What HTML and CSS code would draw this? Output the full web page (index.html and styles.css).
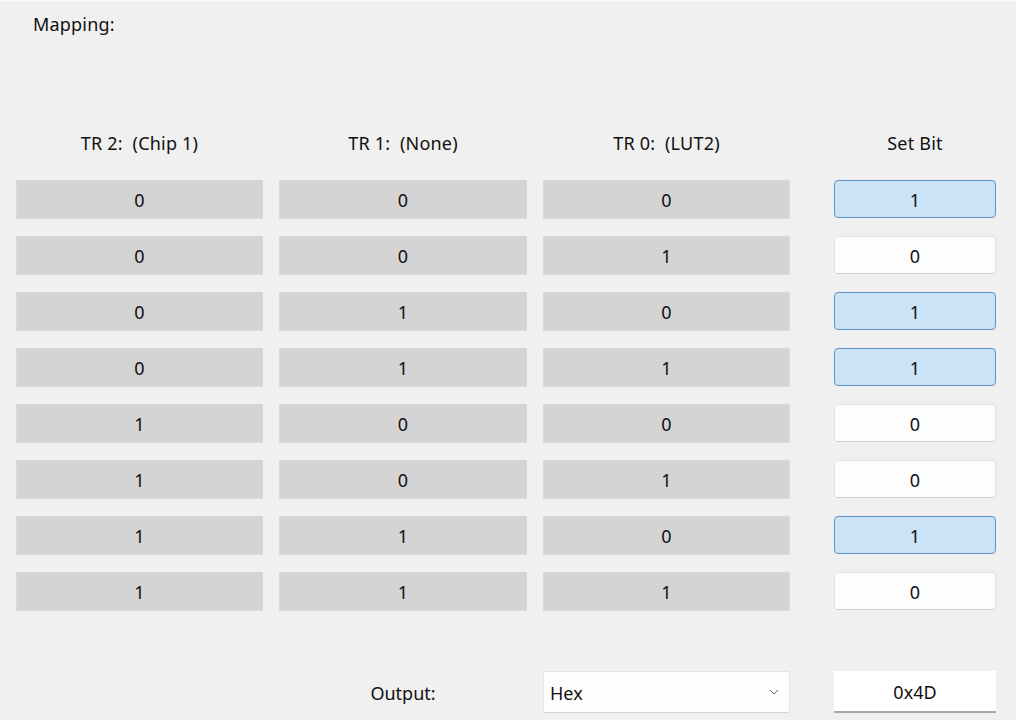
FILE: index.html
```html
<!DOCTYPE html>
<html>
<head>
<meta charset="utf-8">
<link rel="stylesheet" href="styles.css">
</head>
<body>
<div class="panel">
  <div class="title">Mapping:</div>
  <div class="grid">
    <div class="hdr">TR 2:  (Chip 1)</div>
    <div class="hdr">TR 1:  (None)</div>
    <div class="hdr">TR 0:  (LUT2)</div>
    <div class="hdr c4">Set Bit</div>

    <div class="cell">0</div><div class="cell">0</div><div class="cell">0</div><div class="bit on">1</div>
    <div class="cell">0</div><div class="cell">0</div><div class="cell">1</div><div class="bit">0</div>
    <div class="cell">0</div><div class="cell">1</div><div class="cell">0</div><div class="bit on">1</div>
    <div class="cell">0</div><div class="cell">1</div><div class="cell">1</div><div class="bit on">1</div>
    <div class="cell">1</div><div class="cell">0</div><div class="cell">0</div><div class="bit">0</div>
    <div class="cell">1</div><div class="cell">0</div><div class="cell">1</div><div class="bit">0</div>
    <div class="cell">1</div><div class="cell">1</div><div class="cell">0</div><div class="bit on">1</div>
    <div class="cell">1</div><div class="cell">1</div><div class="cell">1</div><div class="bit">0</div>

    <div class="out-row">
      <div></div>
      <div class="out-label">Output:</div>
      <div class="select"><span>Hex</span>
        <svg class="chev" width="10" height="6" viewBox="0 0 10 6"><path d="M1 1 L5 5 L9 1" fill="none" stroke="#606060" stroke-width="1"/></svg>
      </div>
      <div class="value">0x4D</div>
    </div>
  </div>
</div>
</body>
</html>
```

FILE: styles.css
```css
html, body {
  margin: 0;
  padding: 0;
  background: #f0f0f0;
  width: 1016px;
  height: 720px;
  overflow: hidden;
}
.panel {
  border-top: 1px solid #fafafa;
  padding: 11px 0 0 16px;
  font-family: "Noto Sans", "Open Sans", sans-serif;
  font-size: 18px;
  color: #111;
}
.title {
  padding-left: 17px;
  height: 24px;
  line-height: 24px;
  letter-spacing: 0.2px;
}
.grid {
  margin-top: 88px;
  display: grid;
  grid-template-columns: 247px 248px 247px 190px;
  column-gap: 16px;
  row-gap: 17px;
  grid-auto-rows: 39px;
}
.hdr {
  white-space: pre;
  text-align: center;
  line-height: 39px;
  letter-spacing: 0.2px;
}
.c4 { margin-left: 28px; width: 162px; }
.cell {
  background: #d4d4d4;
  border: 1px solid #d9d9d9;
  box-sizing: border-box;
  text-align: center;
  line-height: 39px;
}
.bit {
  margin-left: 28px;
  width: 162px;
  height: 38px;
  box-sizing: border-box;
  border: 1px solid #e0e0e0;
  border-bottom-color: #d0d0d0;
  border-radius: 4px;
  background: #fdfdfd;
  text-align: center;
  line-height: 38px;
}
.bit.on {
  background: #cce4f7;
  border-color: #5f93c9;
}
.out-row {
  grid-column: 1 / -1;
  display: grid;
  grid-template-columns: 247px 248px 247px 190px;
  column-gap: 16px;
  margin-top: 43px;
  height: 42px;
}
.out-label {
  text-align: center;
  line-height: 44px;
}
.select {
  background: #fdfdfd;
  border: 1px solid #e3e3e3;
  border-bottom-color: #d2d2d2;
  border-radius: 3px;
  box-sizing: border-box;
  height: 42px;
  display: flex;
  align-items: center;
  justify-content: space-between;
  padding: 2px 10px 0 6px;
}
.chev { margin-top: -3px; }
.value {
  margin-left: 28px;
  width: 162px;
  height: 42px;
  box-sizing: border-box;
  background: #fff;
  border-bottom: 2px solid #a8a8a8;
  text-align: center;
  line-height: 42px;
}
```
